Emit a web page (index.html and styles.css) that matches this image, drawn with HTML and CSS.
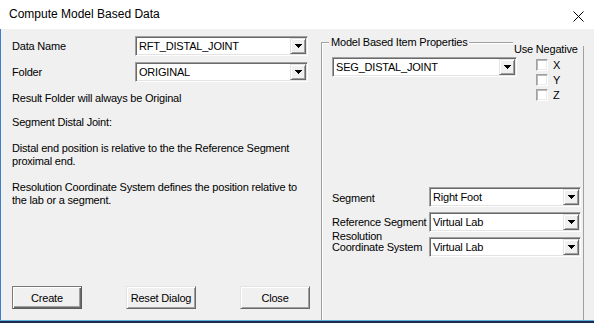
FILE: index.html
```html
<!DOCTYPE html>
<html>
<head>
<meta charset="utf-8">
<title>Compute Model Based Data</title>
<link rel="stylesheet" href="styles.css">
</head>
<body>
<div class="window">
  <div class="titlebar">
    <span class="title">Compute Model Based Data</span>
    <svg class="close" width="11" height="11" viewBox="0 0 11 11"><path d="M0.5 0.5L10.5 10.5M10.5 0.5L0.5 10.5" stroke="#000" stroke-width="1" fill="none"/></svg>
  </div>
  <div class="main">
    <div class="left">
      <div class="row">
        <span class="label">Data Name</span>
        <div class="combo wide"><span class="value">RFT_DISTAL_JOINT</span><span class="drop"><svg width="7" height="4" viewBox="0 0 7 4" shape-rendering="crispEdges"><path d="M0 0h7v1H0zM1 1h5v1H1zM2 2h3v1H2zM3 3h1v1H3z" fill="#000"/></svg></span></div>
      </div>
      <div class="row">
        <span class="label">Folder</span>
        <div class="combo wide"><span class="value">ORIGINAL</span><span class="drop"><svg width="7" height="4" viewBox="0 0 7 4" shape-rendering="crispEdges"><path d="M0 0h7v1H0zM1 1h5v1H1zM2 2h3v1H2zM3 3h1v1H3z" fill="#000"/></svg></span></div>
      </div>
      <p class="note n1">Result Folder will always be Original</p>
      <p class="note n2">Segment Distal Joint:</p>
      <p class="note n3">Distal end position is relative to the the Reference Segment<br>proximal end.</p>
      <p class="note n3">Resolution Coordinate System defines the position relative to<br>the lab or a segment.</p>
      <div class="buttons">
        <button class="btn default">Create</button>
        <button class="btn">Reset Dialog</button>
        <button class="btn">Close</button>
      </div>
    </div>
    <div class="group">
      <span class="legend">Model Based Item Properties</span>
      <span class="neg">Use Negative</span>
      <div class="top-row">
        <div class="combo seg"><span class="value">SEG_DISTAL_JOINT</span><span class="drop"><svg width="7" height="4" viewBox="0 0 7 4" shape-rendering="crispEdges"><path d="M0 0h7v1H0zM1 1h5v1H1zM2 2h3v1H2zM3 3h1v1H3z" fill="#000"/></svg></span></div>
        <div class="checks">
          <div class="check"><span class="box"></span><span>X</span></div>
          <div class="check"><span class="box"></span><span>Y</span></div>
          <div class="check"><span class="box"></span><span>Z</span></div>
        </div>
      </div>
      <div class="props">
        <div class="prop">
          <span class="prop-label low">Segment</span>
          <div class="combo narrow"><span class="value">Right Foot</span><span class="drop"><svg width="7" height="4" viewBox="0 0 7 4" shape-rendering="crispEdges"><path d="M0 0h7v1H0zM1 1h5v1H1zM2 2h3v1H2zM3 3h1v1H3z" fill="#000"/></svg></span></div>
        </div>
        <div class="prop">
          <span class="prop-label">Reference Segment</span>
          <div class="combo narrow"><span class="value">Virtual Lab</span><span class="drop"><svg width="7" height="4" viewBox="0 0 7 4" shape-rendering="crispEdges"><path d="M0 0h7v1H0zM1 1h5v1H1zM2 2h3v1H2zM3 3h1v1H3z" fill="#000"/></svg></span></div>
        </div>
        <div class="prop">
          <span class="prop-label two-line">Resolution<br>Coordinate System</span>
          <div class="combo narrow"><span class="value">Virtual Lab</span><span class="drop"><svg width="7" height="4" viewBox="0 0 7 4" shape-rendering="crispEdges"><path d="M0 0h7v1H0zM1 1h5v1H1zM2 2h3v1H2zM3 3h1v1H3z" fill="#000"/></svg></span></div>
        </div>
      </div>
    </div>
  </div>
  <div class="taskbar"></div>
</div>
</body>
</html>
```
FILE: styles.css
```css
html, body {
  margin: 0;
  padding: 0;
}
body {
  background: #f0f0f0;
  font-family: "Liberation Sans", Arial, sans-serif;
  font-size: 11px;
  letter-spacing: -0.2px;
  color: #000;
}
.window {
  width: 594px;
  height: 323px;
  display: flex;
  flex-direction: column;
  overflow: hidden;
}
.titlebar {
  flex: none;
  height: 29px;
  box-sizing: border-box;
  background: #fff;
  display: flex;
  align-items: center;
  justify-content: space-between;
  padding: 0 10px 0 9px;
}
.title {
  font-size: 12px;
  line-height: 16px;
  letter-spacing: 0;
  margin-top: -1px;
}
.close {
  display: block;
  margin-top: 3px;
}
.main {
  flex: none;
  height: 291px;
  display: flex;
  border-left: 1px solid #3c80c8;
  overflow: hidden;
}
.left {
  flex: none;
  width: 320px;
  box-sizing: border-box;
  padding: 7px 0 11px 11px;
  display: flex;
  flex-direction: column;
}
.row {
  display: flex;
  align-items: center;
  height: 20px;
}
.row + .row {
  margin-top: 6px;
}
.label {
  width: 123px;
  line-height: 13px;
}
.combo {
  box-sizing: border-box;
  height: 20px;
  background: #fff;
  border: 1px solid;
  border-color: #a0a0a0 #fff #fff #a0a0a0;
  box-shadow: inset 1px 1px 0 #696969, inset -1px -1px 0 #e3e3e3;
  display: flex;
  align-items: center;
  padding: 1px 1px 1px 2px;
}
.combo.wide { width: 173px; }
.combo.seg { width: 185px; }
.combo.narrow { width: 152px; }
.value {
  flex: 1;
  line-height: 13px;
  white-space: nowrap;
  overflow: hidden;
  padding-left: 1px;
}
.drop {
  flex: none;
  width: 16px;
  height: 16px;
  box-sizing: border-box;
  background: #f0f0f0;
  border: 1px solid;
  border-color: #e3e3e3 #696969 #696969 #e3e3e3;
  box-shadow: inset 1px 1px 0 #fff, inset -1px -1px 0 #a0a0a0;
  display: flex;
  align-items: center;
  justify-content: center;
}
.drop svg {
  display: block;
}
.note {
  margin: 0;
  line-height: 13px;
}
.n1 { margin-top: 10px; }
.n2 { margin-top: 11px; }
.n3 { margin-top: 13px; }
.buttons {
  margin-top: auto;
  display: flex;
  gap: 44px;
}
.btn {
  width: 70px;
  height: 23px;
  box-sizing: border-box;
  padding: 0;
  font: inherit;
  letter-spacing: inherit;
  color: #000;
  background: #f0f0f0;
  border: 1px solid;
  border-color: #e3e3e3 #696969 #696969 #e3e3e3;
  box-shadow: inset 1px 1px 0 #fff, inset -1px -1px 0 #a0a0a0;
}
.btn.default {
  border-color: #7a7a7a #5a5a5a #5a5a5a #7a7a7a;
  box-shadow: inset 1px 1px 0 #fff, inset -1px -1px 0 #696969, inset -2px -2px 0 #a0a0a0;
}
.group {
  flex: none;
  position: relative;
  margin-top: 13px;
  width: 263px;
  height: 300px;
  box-sizing: border-box;
  border: 1px solid #a0a0a0;
  box-shadow: inset 1px 1px 0 #fff;
  padding: 14px 0 0 10px;
}
.legend {
  position: absolute;
  left: 7px;
  top: -7px;
  padding: 0 2px;
  background: #f0f0f0;
  line-height: 13px;
  white-space: nowrap;
}
.neg {
  position: absolute;
  left: 191px;
  top: -6px;
  width: 70px;
  height: 3px;
  padding: 6px 0 0 1px;
  background: #f0f0f0;
  line-height: 13px;
  white-space: nowrap;
}
.top-row {
  display: flex;
  align-items: flex-start;
}
.checks {
  margin-left: 19px;
  padding-top: 2px;
}
.check {
  display: flex;
  height: 15px;
  gap: 5px;
  line-height: 12px;
}
.box {
  width: 12px;
  height: 12px;
  box-sizing: border-box;
  background: #fff;
  border: 1px solid;
  border-color: #a0a0a0 #fff #fff #a0a0a0;
  box-shadow: inset 1px 1px 0 #b9b9b9, inset -1px -1px 0 #ebebeb;
}
.props {
  margin-top: 83px;
  display: flex;
  flex-direction: column;
  gap: 5px;
}
.prop {
  display: flex;
  align-items: center;
  height: 20px;
}
.prop-label {
  width: 97px;
  flex: none;
  line-height: 13px;
  white-space: nowrap;
}
.prop-label.low {
  margin-top: 3px;
}
.prop-label.two-line {
  line-height: 11px;
  align-self: flex-start;
  margin-top: -6px;
}
.taskbar {
  flex: none;
  height: 3px;
  box-sizing: border-box;
  border-top: 1px solid #5fb0d8;
  background: #1c2b50;
}
```
